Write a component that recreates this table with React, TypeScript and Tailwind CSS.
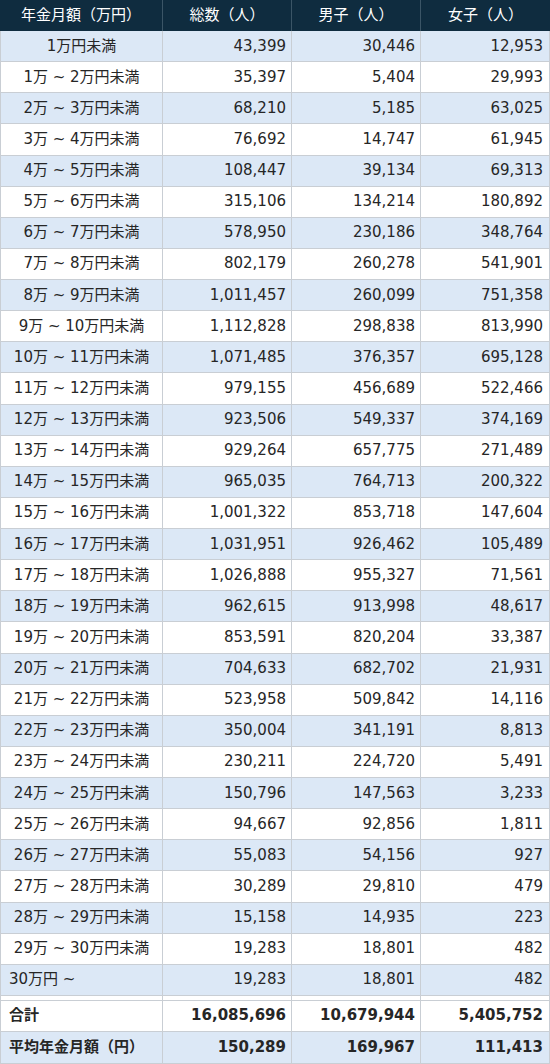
const rows: [string, string, string, string][] = [
  ["1万円未満", "43,399", "30,446", "12,953"],
  ["1万 ~ 2万円未満", "35,397", "5,404", "29,993"],
  ["2万 ~ 3万円未満", "68,210", "5,185", "63,025"],
  ["3万 ~ 4万円未満", "76,692", "14,747", "61,945"],
  ["4万 ~ 5万円未満", "108,447", "39,134", "69,313"],
  ["5万 ~ 6万円未満", "315,106", "134,214", "180,892"],
  ["6万 ~ 7万円未満", "578,950", "230,186", "348,764"],
  ["7万 ~ 8万円未満", "802,179", "260,278", "541,901"],
  ["8万 ~ 9万円未満", "1,011,457", "260,099", "751,358"],
  ["9万 ~ 10万円未満", "1,112,828", "298,838", "813,990"],
  ["10万 ~ 11万円未満", "1,071,485", "376,357", "695,128"],
  ["11万 ~ 12万円未満", "979,155", "456,689", "522,466"],
  ["12万 ~ 13万円未満", "923,506", "549,337", "374,169"],
  ["13万 ~ 14万円未満", "929,264", "657,775", "271,489"],
  ["14万 ~ 15万円未満", "965,035", "764,713", "200,322"],
  ["15万 ~ 16万円未満", "1,001,322", "853,718", "147,604"],
  ["16万 ~ 17万円未満", "1,031,951", "926,462", "105,489"],
  ["17万 ~ 18万円未満", "1,026,888", "955,327", "71,561"],
  ["18万 ~ 19万円未満", "962,615", "913,998", "48,617"],
  ["19万 ~ 20万円未満", "853,591", "820,204", "33,387"],
  ["20万 ~ 21万円未満", "704,633", "682,702", "21,931"],
  ["21万 ~ 22万円未満", "523,958", "509,842", "14,116"],
  ["22万 ~ 23万円未満", "350,004", "341,191", "8,813"],
  ["23万 ~ 24万円未満", "230,211", "224,720", "5,491"],
  ["24万 ~ 25万円未満", "150,796", "147,563", "3,233"],
  ["25万 ~ 26万円未満", "94,667", "92,856", "1,811"],
  ["26万 ~ 27万円未満", "55,083", "54,156", "927"],
  ["27万 ~ 28万円未満", "30,289", "29,810", "479"],
  ["28万 ~ 29万円未満", "15,158", "14,935", "223"],
  ["29万 ~ 30万円未満", "19,283", "18,801", "482"],
  ["30万円 ~", "19,283", "18,801", "482"],
];

const grid = "grid grid-cols-[163px_129px_129px_129px]";
const cell = "flex items-center border-r border-b border-[#c9ced4]";

function Row({
  r,
  striped,
  bold,
  left,
  h,
}: {
  r: [string, string, string, string];
  striped: boolean;
  bold?: boolean;
  left?: boolean;
  h: string;
}) {
  return (
    <div className={`${grid} ${h} ${striped ? "bg-[#dce8f6]" : "bg-white"} ${bold ? "font-bold" : ""}`}>
      <div className={`${cell} border-l ${left ? "justify-start pl-[8px]" : "justify-center"}`}>{r[0]}</div>
      <div className={`${cell} justify-end pr-[5px]`}>{r[1]}</div>
      <div className={`${cell} justify-end pr-[5px]`}>{r[2]}</div>
      <div className={`${cell} justify-end pr-[6px]`}>{r[3]}</div>
    </div>
  );
}

export default function App() {
  return (
    <div
      className="w-[550px] text-[15px] leading-none text-[#262626] bg-white"
      style={{ fontFamily: '"DejaVu Sans", "Noto Sans CJK JP", sans-serif' }}
    >
      {/* header */}
      <div className={`${grid} h-[31px] bg-[#0f2c3f] text-white`}>
        {["年金月額（万円）", "総数（人）", "男子（人）", "女子（人）"].map((t) => (
          <div key={t} className="flex items-center justify-center border-r border-[#3b5566] last:border-r-0">
            {t}
          </div>
        ))}
      </div>

      {rows.map((r, i) => (
        <Row key={r[0]} r={r} striped={i % 2 === 0} left={i === rows.length - 1} h="h-[31.13px]" />
      ))}

      {/* spacer between body and totals */}
      <div className={`${grid} h-[5px] bg-white`}>
        <div className={`${cell} border-l`} />
        <div className={cell} />
        <div className={cell} />
        <div className={cell} />
      </div>

      <Row r={["合計", "16,085,696", "10,679,944", "5,405,752"]} striped={false} bold left h="h-[31px]" />
      <Row r={["平均年金月額（円）", "150,289", "169,967", "111,413"]} striped bold left h="h-[32px]" />
    </div>
  );
}
